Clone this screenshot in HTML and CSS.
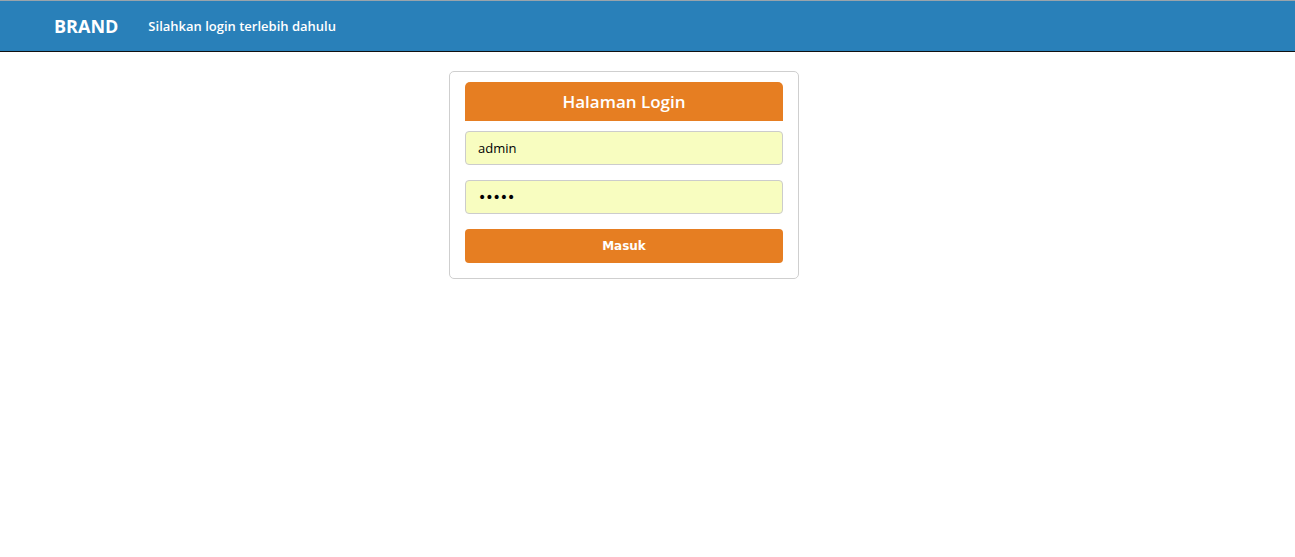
FILE: index.html
```html
<!DOCTYPE html>
<html lang="id">
<head>
<meta charset="utf-8">
<title>Login</title>
<link rel="stylesheet" href="styles.css">
</head>
<body>
<nav class="navbar">
  <span class="brand">BRAND</span>
  <span class="nav-text">Silahkan login terlebih dahulu</span>
</nav>
<main class="main">
  <form class="card">
    <div class="card-head">Halaman Login</div>
    <input class="field" type="text" value="admin">
    <input class="field pass" type="password" value="admin">
    <button class="btn" type="button">Masuk</button>
  </form>
</main>
</body>
</html>
```
FILE: styles.css
```css
* { box-sizing: border-box; }
html, body { margin: 0; padding: 0; background: #fff; }
body { font-family: "Open Sans", "Noto Sans", sans-serif; }
.navbar {
  height: 52px;
  background: #2980b9;
  border-top: 1px solid #9aa4ab;
  border-bottom: 1px solid #111;
  display: flex;
  align-items: center;
  padding-left: 54px;
  color: #fff;
}
.brand { font-size: 18px; font-weight: 700; letter-spacing: 0; margin-right: 30px; }
.nav-text { font-size: 13px; font-weight: 600; }
.main { padding-top: 19px; padding-left: 449px; }
.card {
  width: 350px;
  border: 1px solid #cfcfcf;
  border-radius: 5px;
  padding: 10px 15px 15px;
  display: flex;
  flex-direction: column;
}
.card-head {
  height: 39px;
  background: #e67e22;
  color: #fff;
  border-radius: 5px 5px 0 0;
  font-size: 17px;
  font-weight: 600;
  display: flex;
  align-items: center;
  justify-content: center;
  margin-bottom: 10px;
}
.field {
  height: 34px;
  width: 100%;
  background: #f8fdc0;
  border: 1px solid #cccccc;
  border-radius: 4px;
  padding: 0 12px;
  font-family: "Open Sans", "Noto Sans", sans-serif;
  font-size: 13px;
  color: #000;
  margin-bottom: 15px;
  outline: none;
}
.pass { font-family: "DejaVu Sans", sans-serif; font-size: 14px; letter-spacing: -1px; }
.btn {
  height: 34px;
  width: 100%;
  background: #e67e22;
  color: #fff;
  border: none;
  border-radius: 4px;
  font-family: "DejaVu Sans", Verdana, sans-serif;
  font-weight: 700;
  font-size: 12px;
}
```
